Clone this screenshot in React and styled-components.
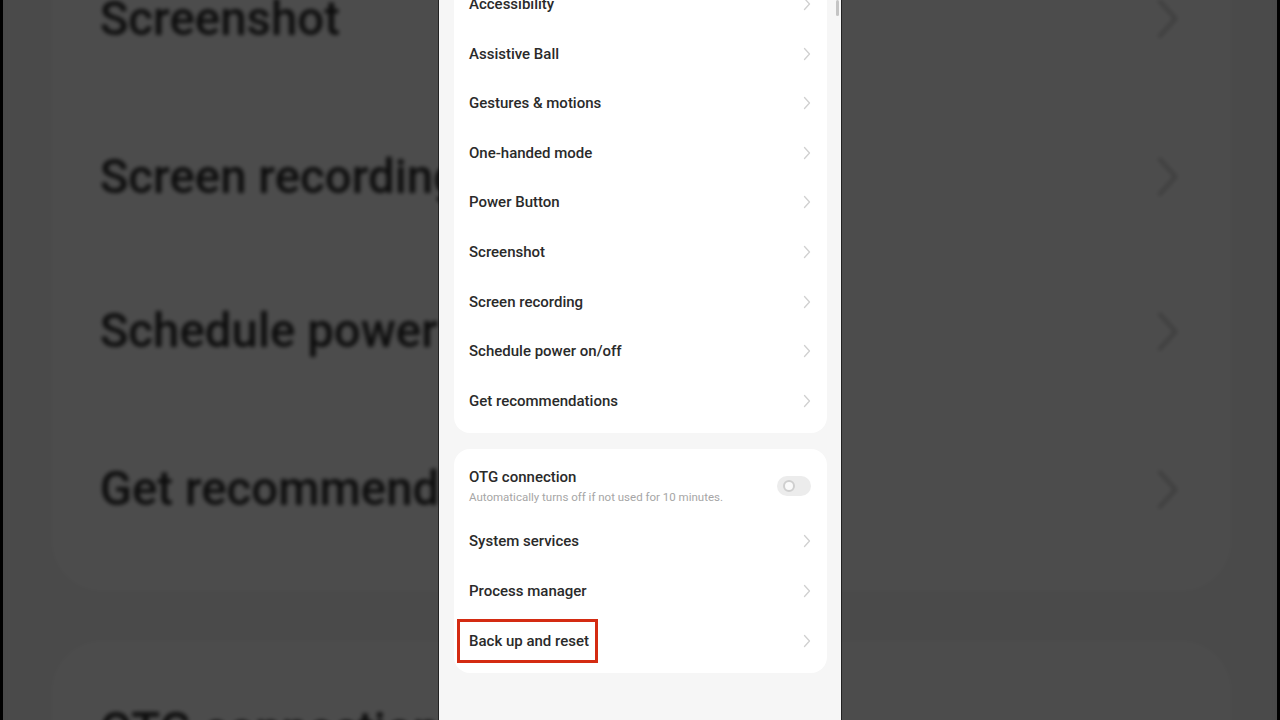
import React from 'react'
import styled, {createGlobalStyle} from 'styled-components'

const Global = createGlobalStyle`
  html, body {
    margin: 0;
    padding: 0;
    background: #000;
    font-family: Roboto, "Noto Sans", "Liberation Sans", sans-serif;
  }
`

const Stage = styled.div`
  position: relative;
  width: 1280px;
  height: 720px;
  overflow: hidden;
  background: #000;
  display: flex;
  justify-content: center;
`

// blurred, darkened, enlarged copy of the phone behind it
const Backdrop = styled.div`
  position: absolute;
  top: 0;
  bottom: 0;
  left: 3px;
  right: 3px;
  overflow: hidden;
  display: flex;
  align-items: center;
  justify-content: center;
  background: #4a4a4a;
`

const BackdropScale = styled.div`
  flex: none;
  transform: scale(3.16);
  filter: blur(0.7px) brightness(0.3);
`

const Phone = styled.div`
  position: relative;
  flex: none;
  width: 402px;
  height: 720px;
  overflow: hidden;
  background: #f6f6f6;
  box-shadow: ${props => props.framed ? '0 0 0 1px rgba(0,0,0,0.55)' : 'none'};
`

const List = styled.div`
  display: flex;
  flex-direction: column;
  gap: 16px;
  padding: 0 14px 0 15px;
  margin-top: -20.8px;
`

const Card = styled.div`
  background: #fff;
  border-radius: 16px;
  padding: ${props => props.pad};
  display: flex;
  flex-direction: column;
`

const Row = styled.div`
  height: ${props => props.tall ? '61px' : '49.6px'};
  display: flex;
  align-items: center;
  justify-content: space-between;
  padding: 0 16px 0 15px;
`

const TextCol = styled.div`
  display: flex;
  flex-direction: column;
  gap: 4px;
`

const Label = styled.span`
  font-size: 15px;
  font-weight: 500;
  color: #2a2a2a;
`

const Highlight = styled(Label)`
  border: 3px solid #d42b12;
  padding: 10px 6px 10px 9px;
  margin-left: -12px;
`

const Sub = styled.span`
  font-size: 11.5px;
  color: #a6a6a6;
`

const Toggle = styled.div`
  width: 34px;
  height: 20px;
  border-radius: 10px;
  background: #ececec;
  display: flex;
  align-items: center;
  padding-left: 6px;
  box-sizing: border-box;
`

const Knob = styled.div`
  width: 8px;
  height: 8px;
  border-radius: 50%;
  border: 2px solid #cfcfcf;
  background: #fafafa;
`

const Scrollbar = styled.div`
  position: absolute;
  top: 0;
  right: 2px;
  width: 3px;
  height: 16px;
  border-radius: 2px;
  background: #c4c4c4;
`

function Chevron()
{
    return (
        <svg width="8" height="14" viewBox="0 0 8 14">
            <polyline points="1.5,1.5 6.5,7 1.5,12.5" fill="none" stroke="#d0d0d0" strokeWidth="1.3" strokeLinecap="round" strokeLinejoin="round" />
        </svg>
    )
}

const topItems = [
    'Accessibility',
    'Assistive Ball',
    'Gestures & motions',
    'One-handed mode',
    'Power Button',
    'Screenshot',
    'Screen recording',
    'Schedule power on/off',
    'Get recommendations',
]

function Screen(props)
{
    return (
        <Phone framed={props.framed}>
            <List>
                <Card pad="0 0 7px">
                    {topItems.map(item => (
                        <Row key={item}>
                            <Label>{item}</Label>
                            <Chevron />
                        </Row>
                    ))}
                </Card>
                <Card pad="7px 0 8px">
                    <Row tall>
                        <TextCol>
                            <Label>OTG connection</Label>
                            <Sub>Automatically turns off if not used for 10 minutes.</Sub>
                        </TextCol>
                        <Toggle><Knob /></Toggle>
                    </Row>
                    <Row>
                        <Label>System services</Label>
                        <Chevron />
                    </Row>
                    <Row>
                        <Label>Process manager</Label>
                        <Chevron />
                    </Row>
                    <Row>
                        {props.framed ? <Highlight>Back up and reset</Highlight> : <Label>Back up and reset</Label>}
                        <Chevron />
                    </Row>
                </Card>
            </List>
            {props.framed && <Scrollbar />}
        </Phone>
    )
}

export default function App()
{
    return (
        <Stage>
            <Global />
            <Backdrop>
                <BackdropScale>
                    <Screen />
                </BackdropScale>
            </Backdrop>
            <Screen framed />
        </Stage>
    )
}
